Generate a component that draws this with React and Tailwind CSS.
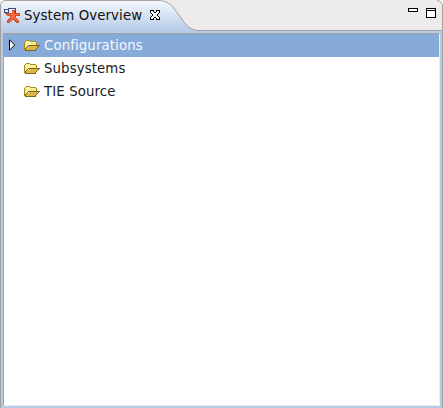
import React from "react";

const font = "font-['DejaVu_Sans',sans-serif] text-[13.33px] leading-[23px] tracking-[0.1px] whitespace-pre";

function SystemIcon() {
  return (
    <svg width="16" height="16" viewBox="0 0 16 16" shapeRendering="crispEdges">
      <path d="M4 1h8v6H4zM0 2h4v4H0z" fill="#3c4b85" />
      <path d="M5 2h6v4H5zM1 3h3v2H1z" fill="#eef0fb" />
      <path d="M1 6h2v1H1z" fill="#c24a30" />
      <path d="M8 3h3v3h5v3h-4v2h1v1h1v1h1v3h-3v-1h-1v-1h-1v-1H8v1H7v1H6v1H3v-3h1v-1h1v-1h1V9H3V8H2V6h6z" fill="#c84e2f" />
      <path d="M8 4h2v3h5v1h-4v3h1v1h1v1h1v2h-1v-1h-1v-1h-1v-1H8v1H7v1H6v1H4v-1h1v-1h1v-1h1V8H3V7h5z" fill="#ff6b35" />
    </svg>
  );
}

function Folder() {
  return (
    <svg width="16" height="11" viewBox="0 0 16 11" shapeRendering="crispEdges">
      <path d="M2 0h4v1H2zM1 1h1v1H1zM6 1h6v1H6zM0 2h1v8H0zM12 2h1v3h-1z" fill="#a18b27" />
      <path d="M2 1h4v1h6v3H5v1H4v1H3v1H2v1H1V2h1z" fill="#fff4a0" />
      <path d="M1 3h1v5H1zM7 3h5v2H7z" fill="#f2e780" />
      <path d="M5 6h9v1h-1v1h-1v1h-1v1H1V9h1V8h1V7h2z" fill="#dfb744" />
      <path d="M4 5h12v1H4zM3 6h1v1H3zM2 7h1v1H2zM1 8h1v2H1zM14 6h1v1h-1zM13 7h1v1h-1zM12 8h1v1h-1zM11 9h1v1h-1zM1 10h11v1H1z" fill="#7d6420" />
    </svg>
  );
}

function CloseIcon() {
  return (
    <svg width="10" height="10" viewBox="0 0 10 10" shapeRendering="crispEdges">
      <path d="M1 1h2v1h4V1h2v2H8v1H7v2h1v1h1v2H7V8H3v1H1V7h1V6h1V4H2V3H1z" fill="#fff" />
      <path d="M0 0h4v1H0zM6 0h4v1H6zM0 1h1v2H0zM3 1h1v1H3zM6 1h1v1H6zM9 1h1v2H9zM4 2h2v1H4zM1 3h1v1H1zM8 3h1v1H8zM2 4h1v2H2zM7 4h1v2H7zM1 6h1v1H1zM8 6h1v1H8zM0 7h1v2H0zM4 7h2v1H4zM9 7h1v2H9zM3 8h1v1H3zM6 8h1v1H6zM0 9h4v1H0zM6 9h4v1H6z" fill="#000" />
    </svg>
  );
}

function Row({ label, selected }) {
  return (
    <div className={`flex h-[23px] items-center ${selected ? "bg-[#86abd9] text-[#f5f8fc]" : "text-[#1a1a1a]"}`}>
      <div className="flex w-5 pl-[5px]">
        {selected && (
          <svg className="-mt-px" width="7" height="12" viewBox="0 0 7 12">
            <path d="M.5.8v10.400L5.700 6z" fill="#fff" stroke="#000" />
          </svg>
        )}
      </div>
      <Folder />
      <span className={`pl-1 ${font}`}>{label}</span>
    </div>
  );
}

export default function App() {
  return (
    <div className="flex h-[408px] w-[443px] flex-col overflow-hidden bg-[#edeceb]">
      <header className="relative flex h-[31px] shrink-0 items-start">
        <svg className="absolute inset-0" width="443" height="31" viewBox="0 0 443 31">
          <defs>
            <linearGradient id="tab" x1="0" y1="0" x2="0" y2="1">
              <stop offset="0" stopColor="#f5f8fd" />
              <stop offset="1" stopColor="#b6cbe8" />
            </linearGradient>
          </defs>
          <path d="M0 0H6Q.5 .5 .5 6V0z" fill="#fff" />
          <path d="M.5 31V6Q.5 .5 6 .5H158C165 .5 169 3 173 7L184 22C188 27 192 30.5 199 30.5V31z" fill="url(#tab)" />
          <path d="M.5 31V6Q.5 .5 6 .5H158C165 .5 169 3 173 7L184 22C188 27 192 30.5 199 30.5H443" fill="none" stroke="#a5a29f" />
          <path d="M437 0H443V6Q442 1 437 0z" fill="#fff" />
          <path d="M437 .5Q442.5 1 442.5 6V31" fill="none" stroke="#a5a29f" />
        </svg>
        <div className="relative flex w-full items-start pl-1">
          <div className="pt-[7px]"><SystemIcon /></div>
          <span className={`w-[130px] shrink-0 pl-1 pt-[4px] text-[#111] ${font}`}>System Overview</span>
          <div className="pt-[10px]"><CloseIcon /></div>
          <div className="ml-auto mr-[7px] mt-2 flex items-start gap-2">
            <span className="h-1 w-2.5 border border-black bg-white" />
            <span className="h-2.5 w-2.5 border border-black bg-white"><span className="mt-px block h-px bg-black" /></span>
          </div>
        </div>
      </header>
      <div className="flex min-h-0 flex-1 border-x border-[#a5a29f]">
        <div className="flex flex-1 bg-[#b6cbe8] p-0.5">
          <main className="flex-1 border border-b-[#edeceb] border-l-[#a5a29f] border-r-[#edeceb] border-t-[#a5a29f] bg-white">
            <Row label="Configurations" selected />
            <Row label="Subsystems" />
            <Row label="TIE Source" />
          </main>
        </div>
      </div>
    </div>
  );
}
